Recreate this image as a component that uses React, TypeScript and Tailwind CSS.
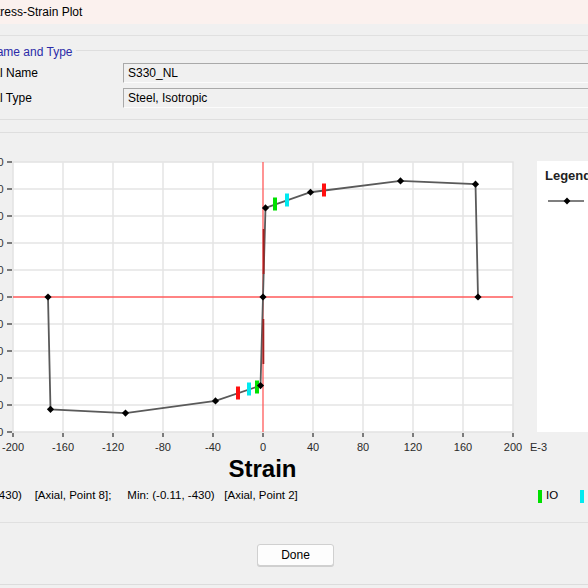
import React from "react";

const X = (s: number) => 263 + s * 1.25;
const Y = (v: number) => 164 - v * 0.27;

const CURVE: [number, number][] = [
  [-172, 0],
  [-170, -416],
  [-110, -430],
  [-38, -385],
  [-2, -328],
  [0, 0],
  [2, 330],
  [38, 388],
  [110, 430],
  [170, 418],
  [172, 0],
];

// hinge markers: [x px, y px (page), colour]
const MARKERS: [number, number, string][] = [
  [275, 205, "#00e000"],
  [287, 201, "#00eaf0"],
  [324, 191, "#ff1010"],
  [238, 394, "#ff1010"],
  [249, 390, "#00eaf0"],
  [257, 388, "#00e000"],
];

const X_TICKS = [-200, -160, -120, -80, -40, 0, 40, 80, 120, 160, 200];
const Y_TICKS = [500, 400, 300, 200, 100, 0, -100, -200, -300, -400, -500];

function Diamond({ cx, cy, r = 3.6 }: { cx: number; cy: number; r?: number }) {
  return <polygon points={`${cx},${cy - r} ${cx + r},${cy} ${cx},${cy + r} ${cx - r},${cy}`} fill="#000" />;
}

function StressStrainChart() {
  const path = CURVE.map(([s, v]) => `${X(s)},${Y(v)}`).join(" ");
  return (
    <svg width={537} height={322} className="shrink-0 overflow-visible" style={{ fontFamily: "'Liberation Sans', Arial, sans-serif" }}>
      <rect x={13} y={29} width={500} height={270} fill="#fff" stroke="#e2e2e2" strokeWidth={1.5} />
      {X_TICKS.slice(1, -1).map((s) =>
        s === 0 ? null : <line key={s} x1={X(s)} x2={X(s)} y1={29} y2={299} stroke="#e4e4e4" strokeWidth={1.5} />
      )}
      {Y_TICKS.slice(1, -1).map((v) =>
        v === 0 ? null : <line key={v} x1={13} x2={513} y1={Y(v)} y2={Y(v)} stroke="#e4e4e4" strokeWidth={1.5} />
      )}
      <line x1={13} x2={513} y1={Y(0)} y2={Y(0)} stroke="#ff5a5a" strokeWidth={1.3} />
      <line x1={X(0)} x2={X(0)} y1={29} y2={299} stroke="#ff5a5a" strokeWidth={1.3} />

      {Y_TICKS.map((v) => (
        <g key={v}>
          <line x1={7} x2={12} y1={Y(v)} y2={Y(v)} stroke="#555" strokeWidth={1.5} />
          <text x={3.5} y={Y(v) + 4} fontSize={11} fill="#333" textAnchor="end">
            {v}
          </text>
        </g>
      ))}
      {X_TICKS.map((s) => (
        <g key={s}>
          <line x1={X(s)} x2={X(s)} y1={300} y2={304} stroke="#555" strokeWidth={1.5} />
          <text x={X(s)} y={318} fontSize={11} fill="#2a2a2a" textAnchor="middle">
            {s}
          </text>
        </g>
      ))}
      <text x={530} y={318} fontSize={11} fill="#2a2a2a">
        E-3
      </text>

      <polyline points={path} fill="none" stroke="#5a5a5a" strokeWidth={1.8} />
      <line x1={263.6} x2={263.6} y1={96} y2={141} stroke="#a52020" strokeWidth={1.8} />
      <line x1={263.4} x2={263.4} y1={186} y2={231} stroke="#a52020" strokeWidth={1.8} />
      {MARKERS.map(([x, y, c], i) => (
        <rect key={i} x={x - 2} y={y - 134 - 6.5} width={4} height={13} fill={c} />
      ))}
      {CURVE.map(([s, v], i) => (
        <Diamond key={i} cx={X(s)} cy={Y(v)} />
      ))}
    </svg>
  );
}

function Field({ label, value }: { label: string; value: string }) {
  return (
    <div className="flex h-[20px] items-center">
      <div className="w-[123px] shrink-0 overflow-hidden whitespace-nowrap">
        <span className="-ml-[40px] inline-block">{label}</span>
      </div>
      <div className="-mr-[20px] flex h-[20px] flex-1 items-center border border-t-[#a9a9a9] border-l-[#a9a9a9] border-r-[#e8e8e8] border-b-[#fbfbfb] bg-[#f0f0f0] pl-[4px]">
        {value}
      </div>
    </div>
  );
}

export default function App() {
  return (
    <div className="h-[588px] w-[588px] overflow-hidden bg-[#f0f0f0] font-['Liberation_Sans',Arial,sans-serif] text-[12px] text-black">
      <div className="flex h-[24px] items-center overflow-hidden whitespace-nowrap bg-[#fbf1ee]">
        <span className="-ml-[11px]">Stress-Strain Plot</span>
      </div>
      <div className="h-[12px] border-b border-[#e0e0e0]" />

      <div className="relative mt-[14px] h-[70px] border-y border-[#dedede] pt-[12px]">
        <span className="absolute -top-[8px] left-0 overflow-hidden whitespace-nowrap bg-[#f0f0f0] pr-[3px] text-[#2b2ba8]">
          <span className="-ml-[58px] inline-block">Material Name and Type</span>
        </span>
        <div className="flex flex-col gap-[5px]">
          <Field label="Material Name" value="S330_NL" />
          <Field label="Material Type" value="Steel, Isotropic" />
        </div>
      </div>

      <div className="mt-[12px] flex border-t border-[#dedede]">
        <StressStrainChart />
        <div className="mt-[28px] h-[271px] flex-1 overflow-hidden whitespace-nowrap bg-white pl-[8px] pt-[5px]">
          <div className="text-[13px] font-bold text-[#222]">Legend</div>
          <svg width={40} height={12} className="ml-[3px] mt-[9px]">
            <line x1={0} x2={36} y1={6} y2={6} stroke="#555" strokeWidth={1.5} />
            <Diamond cx={19} cy={6} r={3.4} />
          </svg>
        </div>
      </div>

      <div className="flex h-[28px] w-[525px] items-center justify-center text-[24px] font-bold leading-none">Strain</div>

      <div className="mt-[4px] flex h-[18px] items-center whitespace-nowrap text-[11.5px]">
        <div className="w-[538px] shrink-0 overflow-hidden">
          <span className="-ml-[61px] inline-block whitespace-pre">
            {"Max: (0.11, 430)    [Axial, Point 8];     Min: (-0.11, -430)   [Axial, Point 2]"}
          </span>
        </div>
        <div className="h-[13px] w-[4px] shrink-0 bg-[#00e000]" />
        <span className="ml-[4px] shrink-0">IO</span>
        <div className="ml-[22px] h-[13px] w-[4px] shrink-0 bg-[#00eaf0]" />
        <span className="ml-[4px] shrink-0">LS</span>
      </div>

      <div className="mt-[17px] border-b border-[#e0e0e0]" />

      <div className="mt-[21px] flex justify-center pl-[3px]">
        <button
          type="button"
          className="flex h-[22px] w-[77px] items-center justify-center rounded-[3px] border border-[#d0d0d0] bg-[#fdfdfd] text-[12px] shadow-[0_1px_0_#cfcfcf]"
        >
          Done
        </button>
      </div>

      <div className="mt-[18px] border-b border-[#dcdcdc]" />
    </div>
  );
}
